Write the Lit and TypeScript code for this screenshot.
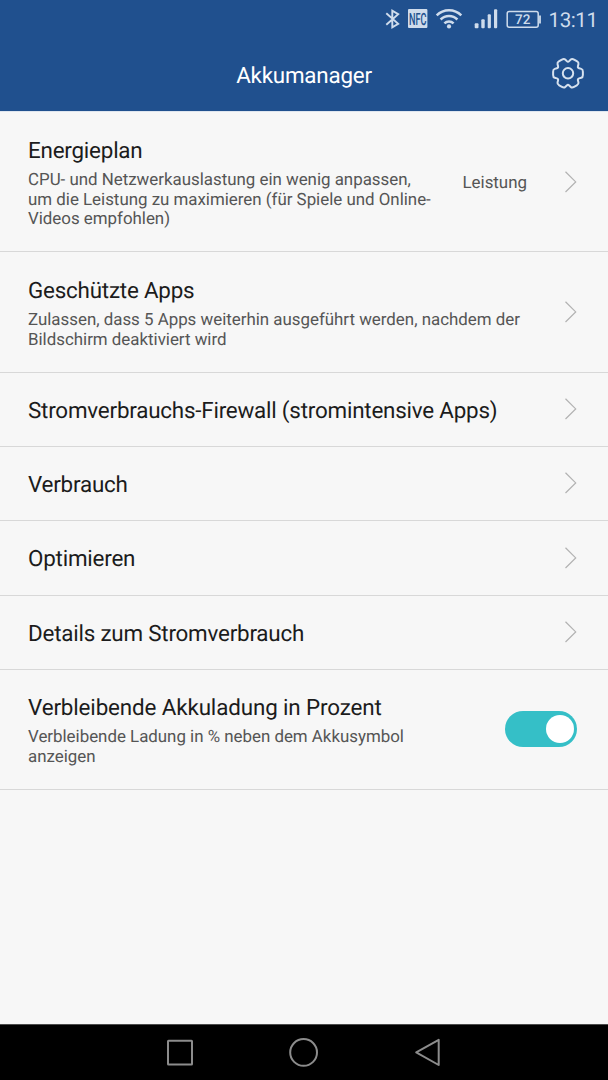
import { LitElement, html, css, svg, nothing } from "lit";
import { customElement, property } from "lit/decorators.js";

/** Outline of a six-toothed cog, centred on the origin, with softened corners. */
function cogPath(): string {
  const pts: [number, number][] = [];
  const polar = (deg: number, r: number) => {
    const a = (deg * Math.PI) / 180;
    pts.push([r * Math.cos(a), r * Math.sin(a)]);
  };
  for (let k = 0; k < 6; k++) {
    polar(k * 60 - 15, 15.4);
    polar(k * 60 + 15, 15.4);
    polar(k * 60 + 30, 11);
  }
  const n = pts.length;
  const mix = (a: [number, number], b: [number, number], t: number) =>
    `${(a[0] + (b[0] - a[0]) * t).toFixed(2)} ${(a[1] + (b[1] - a[1]) * t).toFixed(2)}`;
  let d = "";
  for (let i = 0; i < n; i++) {
    const prev = pts[(i + n - 1) % n];
    const cur = pts[i];
    const next = pts[(i + 1) % n];
    d += `${i ? "L" : "M"}${mix(cur, prev, 0.3)}Q${mix(cur, cur, 0)} ${mix(cur, next, 0.3)}`;
  }
  return d + "Z";
}

@customElement("status-bar")
class StatusBar extends LitElement {
  static styles = css`
    :host {
      display: block;
      height: 38px;
      color: #cfdcec;
    }
    svg {
      display: block;
    }
    .time {
      font: 20.6px/24px Roboto, sans-serif;
    }
    .pct {
      font: 500 13.5px Roboto, sans-serif;
    }
    .nfc {
      font: 500 17px Roboto, sans-serif;
    }
  `;
  render() {
    return html`<svg width="608" height="38" viewBox="0 0 608 38" fill="none" stroke="currentColor">
      <path d="M386.3 13.3L398.2 23.9L392.3 27.4V10.6L398.2 14.1L386.3 24.7" stroke-width="1.9" />
      <rect x="408" y="9" width="19.4" height="19" rx="1" fill="currentColor" stroke="none" />
      <text class="nfc" x="409" y="24.7" fill="#20508e" stroke="none" textLength="17.4" lengthAdjust="spacingAndGlyphs">NFC</text>
      <g stroke-width="2.5">
        <path d="M436.7 15.4a17.3 17.3 0 0 1 24.6 0M440.6 19.5a11.9 11.9 0 0 1 16.8 0M444.4 23.3a6.6 6.6 0 0 1 9.2 0" />
        <circle cx="449" cy="26.4" r="2.1" fill="currentColor" stroke="none" />
      </g>
      <g fill="currentColor" stroke="none">
        <rect x="474.7" y="23.3" width="3.8" height="5" rx="1" />
        <rect x="481.3" y="19.3" width="3.4" height="9" rx="1" />
        <rect x="487.7" y="14.3" width="3.2" height="14" rx="1" />
        <rect x="494" y="9.2" width="3.2" height="19.1" rx="1" />
      </g>
      <rect x="507.2" y="11.4" width="31" height="15.8" rx="2" stroke-width="1.5" />
      <path d="M540 15.5v8" stroke-width="1.8" />
      <g fill="currentColor" stroke="none">
        <text class="pct" x="515" y="24.2">72</text>
        <text class="time" x="548.5" y="26.6" textLength="49.5">13:11</text>
      </g>
    </svg>`;
  }
}

@customElement("title-bar")
class TitleBar extends LitElement {
  static styles = css`
    :host {
      display: grid;
      grid-template-columns: 80px 1fr 80px;
      align-items: center;
      height: 72px;
      color: #fff;
    }
    .title {
      grid-column: 2;
      padding-top: 3px;
      text-align: center;
      font-size: 22.4px;
      letter-spacing: -0.22px;
      line-height: 28px;
    }
    .cog {
      display: block;
      justify-self: center;
      color: #d6e1ee;
    }
  `;
  render() {
    return html`<div class="title">Akkumanager</div>
      <svg class="cog" width="36" height="36" viewBox="-18 -17.3 36 36" fill="none" stroke="currentColor" stroke-width="2">
        <path d=${cogPath()} />
        <circle r="5.2" />
      </svg>`;
  }
}

@customElement("setting-row")
class SettingRow extends LitElement {
  @property() heading = "";
  @property({ attribute: false }) lines: string[] = [];
  @property() value = "";
  @property({ type: Boolean }) toggle = false;

  static styles = css`
    :host {
      display: flex;
      align-items: center;
      box-sizing: border-box;
      padding: 0 31px 0 28px;
      border-bottom: 1px solid #d8d8d8;
    }
    .text {
      flex: 1;
      padding-top: 3px;
      white-space: nowrap;
    }
    :host([roomy]) .text {
      padding-top: 5px;
    }
    .heading {
      font-size: 22.4px;
      letter-spacing: -0.21px;
      line-height: 27px;
      color: #1c1c1c;
    }
    :host([toggle]) .heading {
      letter-spacing: -0.13px;
    }
    .detail {
      margin-top: 6px;
      font-size: 16.9px;
      letter-spacing: -0.01px;
      line-height: 19.7px;
      color: #555;
    }
    .line {
      display: block;
    }
    .value {
      margin-right: 38px;
      padding-top: 2px;
      font-size: 16.9px;
      line-height: 20px;
      color: #555;
    }
    .chevron {
      display: block;
      margin-bottom: 1px;
    }
    :host([roomy]) .chevron {
      margin-bottom: 0;
    }
    .switch {
      display: flex;
      justify-content: flex-end;
      box-sizing: border-box;
      width: 72px;
      height: 36px;
      margin-bottom: 1px;
      padding: 4px 3px;
      border-radius: 18px;
      background: #35bfc7;
    }
    .knob {
      width: 28px;
      height: 28px;
      border-radius: 50%;
      background: #fff;
    }
  `;
  render() {
    return html`<div class="text">
        <div class="heading">${this.heading}</div>
        ${this.lines.length
          ? html`<div class="detail">${this.lines.map((l) => html`<span class="line">${l}</span>`)}</div>`
          : nothing}
      </div>
      ${this.value ? html`<div class="value">${this.value}</div>` : nothing}
      ${this.toggle
        ? html`<div class="switch"><div class="knob"></div></div>`
        : html`<svg class="chevron" width="12" height="22" viewBox="0 0 12 22" fill="none" stroke="#b2b2b2" stroke-width="1.2">
            <path d="M0.5 0.8L10.7 10.9L0.5 21" />
          </svg>`}`;
  }
}

@customElement("nav-bar")
class NavBar extends LitElement {
  static styles = css`
    :host {
      display: block;
      box-sizing: border-box;
      height: 56px;
      border-top: 1px solid #4c4c4c;
      background: #000;
    }
    svg {
      display: block;
    }
  `;
  render() {
    return html`<svg width="608" height="55" viewBox="0 1025 608 55" fill="none" stroke="#8c8c8c" stroke-width="2" stroke-linejoin="round">
      ${svg`<rect x="168" y="1040.7" width="24" height="23.8" rx="0.5" />
      <circle cx="303.6" cy="1052.4" r="13.4" />
      <path d="M438.7 1039.8V1065L416.2 1052.4Z" />`}
    </svg>`;
  }
}

@customElement("app-root")
class AppRoot extends LitElement {
  static styles = css`
    :host {
      display: flex;
      flex-direction: column;
      width: 608px;
      height: 1080px;
      background: #f7f7f7;
      font-family: Roboto, sans-serif;
      text-rendering: geometricPrecision;
      overflow: hidden;
    }
    .top {
      height: 111px;
      background: #20508e;
      border-bottom: 1px solid #dfe6ef;
    }
    .list {
      flex: 1;
    }
    .h140 {
      height: 140px;
    }
    .h121 {
      height: 121px;
    }
    .h120 {
      height: 120px;
    }
    .h75 {
      height: 75px;
    }
    .h74 {
      height: 74px;
    }
  `;
  render() {
    return html`<header class="top"><status-bar></status-bar><title-bar></title-bar></header>
      <main class="list">
        <setting-row
          class="h140"
          roomy
          heading="Energieplan"
          value="Leistung"
          .lines=${[
            "CPU- und Netzwerkauslastung ein wenig anpassen,",
            "um die Leistung zu maximieren (für Spiele und Online-",
            "Videos empfohlen)",
          ]}
        ></setting-row>
        <setting-row
          class="h121"
          roomy
          heading="Geschützte Apps"
          .lines=${["Zulassen, dass 5 Apps weiterhin ausgeführt werden, nachdem der", "Bildschirm deaktiviert wird"]}
        ></setting-row>
        <setting-row class="h74" heading="Stromverbrauchs-Firewall (stromintensive Apps)"></setting-row>
        <setting-row class="h74" heading="Verbrauch"></setting-row>
        <setting-row class="h75" heading="Optimieren"></setting-row>
        <setting-row class="h74" heading="Details zum Stromverbrauch"></setting-row>
        <setting-row
          class="h120"
          heading="Verbleibende Akkuladung in Prozent"
          toggle
          .lines=${["Verbleibende Ladung in % neben dem Akkusymbol", "anzeigen"]}
        ></setting-row>
      </main>
      <nav-bar></nav-bar>`;
  }
}
